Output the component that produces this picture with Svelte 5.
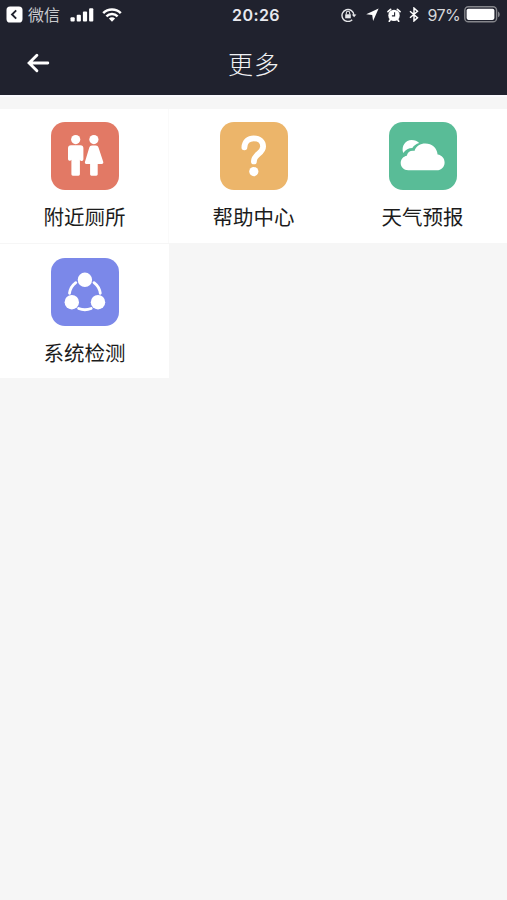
<script lang="ts">
  type IconName = 'toilet' | 'help' | 'weather' | 'system';

  interface MenuItem {
    icon: IconName;
    label: string;
    color: string;
  }

  const items: MenuItem[] = [
    { icon: 'toilet', label: '附近厕所', color: '#e27965' },
    { icon: 'help', label: '帮助中心', color: '#ecb56a' },
    { icon: 'weather', label: '天气预报', color: '#59bc97' },
    { icon: 'system', label: '系统检测', color: '#7b88e9' },
  ];
</script>

<div class="page">
  <header>
    <div class="status-bar">
      <div class="status-left">
        <svg class="back-app" width="17" height="17" viewBox="0 0 17 17">
          <rect x="0.5" y="0.5" width="16" height="16" rx="3.6" fill="#fff" />
          <path d="M10.2 4.3 6 8.5l4.2 4.2" fill="none" stroke="#20222e" stroke-width="1.9" />
        </svg>
        <span class="app-name">微信</span>
        <svg class="signal" width="24" height="14" viewBox="0 0 24 14" fill="#fff">
          <rect x="0.5" y="9.2" width="4.2" height="4.3" rx="1" />
          <rect x="6.7" y="6.7" width="4.2" height="6.8" rx="1" />
          <rect x="12.9" y="3.4" width="4.2" height="10.1" rx="1" />
          <rect x="19.1" y="0.3" width="4.2" height="13.2" rx="1" />
        </svg>
        <svg class="wifi" width="20" height="14" viewBox="0 0 20 14" fill="none" stroke="#fff" stroke-width="2.5">
          <path d="M1.2 5.1a12.5 12.5 0 0 1 17.6 0" />
          <path d="M4.4 8.4a8 8 0 0 1 11.2 0" />
          <path d="m10 13.8-3.1-3.2a4.4 4.4 0 0 1 6.2 0Z" fill="#fff" stroke="none" />
        </svg>
      </div>
      <span class="time">20:26</span>
      <div class="status-right">
        <svg class="lock" width="16" height="14" viewBox="0 0 16 14" fill="none" stroke="#e4e5e8" stroke-width="1.4">
          <path d="M11.2 11.8A6 6 0 1 1 13 7.2" />
          <path d="m10.8 6.4 2.3 2.8 2.3-2.8Z" fill="#e4e5e8" stroke="none" />
          <rect x="4.2" y="6.3" width="5.6" height="4" fill="#e4e5e8" stroke="none" />
          <path d="M5.3 6.5V5a1.7 1.7 0 0 1 3.4 0v1.5" stroke-width="1.1" />
        </svg>
        <svg class="location" width="13" height="13" viewBox="0 0 13 13">
          <path d="M12.6.4.2 6.2l6 .7.9 6Z" fill="#fff" />
        </svg>
        <svg class="alarm" width="14" height="14" viewBox="0 0 14 14">
          <path d="M1 3.6 3.6 1.3M13 3.6l-2.6-2.3M3.4 11.6 2.3 13.2M10.6 11.6l1.1 1.6" fill="none" stroke="#fff" stroke-width="1.7" stroke-linecap="round" />
          <circle cx="7" cy="7.4" r="5.7" fill="#fff" />
          <path d="M7.6 4.3v3.6H4.9" fill="none" stroke="#20222e" stroke-width="1.1" />
        </svg>
        <svg class="bluetooth" width="10" height="15" viewBox="0 0 10 15">
          <path d="m1 4.2 7.5 6.6L5 13.9V1.1l3.5 3.1L1 10.8" fill="none" stroke="#fff" stroke-width="1.5" />
        </svg>
        <span class="percent">97%</span>
        <svg class="battery" width="37" height="17" viewBox="0 0 37 17">
          <rect x="0.8" y="0.8" width="31.8" height="15" rx="3.6" fill="none" stroke="#85868b" stroke-width="1.4" />
          <rect x="2.6" y="2.7" width="27.8" height="11.2" rx="1.8" fill="#fff" />
          <path d="M34 5.4c2.3.8 2.3 5 0 5.8Z" fill="#85868b" />
        </svg>
      </div>
    </div>

    <nav>
      <button class="back" aria-label="返回">
        <svg width="24" height="22" viewBox="0 0 24 22" fill="none" stroke="#fff" stroke-width="2.9" stroke-linecap="round">
          <path d="M10.9 3.2 3.1 11l7.8 7.8M3.4 11h18.4" />
        </svg>
      </button>
      <h1>更多</h1>
    </nav>
  </header>

  <main class="grid">
    {#each items as item (item.icon)}
      <div class="cell">
        <div class="tile" style="background: {item.color}">
          <svg width="68" height="68" viewBox="0 0 68 68" fill="#fff">
            {#if item.icon === 'toilet'}
              <circle cx="24.7" cy="17.6" r="4.6" />
              <path d="M20 23.2h9.4a3 3 0 0 1 3 3v11a1.8 1.8 0 0 1-3.5.6v14.5a1.4 1.4 0 0 1-1.4 1.4h-5.7a1.4 1.4 0 0 1-1.4-1.4V37.8a1.8 1.8 0 0 1-3.4-.6v-11a3 3 0 0 1 3-3Z" />
              <circle cx="42.9" cy="17.6" r="4.6" />
              <path d="M41 23.4h3.8c1.5 0 2.2.8 2.7 2.2l4.7 14.1c.4 1.4-.2 2.2-1.4 2.2h-4.1v10.4c0 .8-.6 1.4-1.4 1.4h-4.8c-.8 0-1.4-.6-1.4-1.4V41.9h-3.8c-1.2 0-1.7-.8-1.3-2.2l4.3-14.1c.5-1.4 1.2-2.2 2.7-2.2Z" />
            {:else if item.icon === 'help'}
              <path d="M24.4 25.4c.3-5.8 4-9 9.4-9 5.7 0 9.3 3.3 9.3 8.2 0 7.3-9.2 7.2-9.2 14.8" fill="none" stroke="#fff" stroke-width="5.8" stroke-linecap="round" />
              <circle cx="33.8" cy="49.6" r="4.6" />
            {:else if item.icon === 'weather'}
              <path d="M14.2 31C12 24 16.5 18 22.6 18c3.2 0 5.8 1 7.6 2.9-3.2.8-5.3 2.5-6.9 5.1-3.9.1-6.4 1.4-9.1 5Z" />
              <path d="M19.3 48.3c-4.6 0-7.6-3.2-7.6-7.2 0-4 2.6-6.7 6.1-7.4.6-3.4 3.5-5.4 7.6-4.8 2.1-4.9 5.9-7.3 10.9-7.3 6.8 0 11.6 4.2 12.3 11 4.3.6 7 3.8 7 7.9 0 4.5-3.3 7.8-7.9 7.8Z" />
            {:else}
              <path d="M18.5 35.3a16 16 0 0 1 6.3-10.6M43 24.7a16 16 0 0 1 6.3 10.6M27.6 50.5a17 17 0 0 0 12.6 0" fill="none" stroke="#fff" stroke-width="2.8" stroke-linecap="round" />
              <circle cx="33.9" cy="21.8" r="7.2" />
              <circle cx="20.8" cy="44.2" r="7.2" />
              <circle cx="47" cy="44.2" r="7.2" />
            {/if}
          </svg>
        </div>
        <span class="label">{item.label}</span>
      </div>
    {/each}
  </main>
</div>

<style>
  :global(body) {
    background: #f6f6f6;
  }

  .page {
    min-height: 100vh;
    background: #f6f6f6;
    font-family: 'Noto Sans CJK SC', sans-serif;
  }

  header {
    height: 95px;
    border-bottom: 2px solid #fafafe;
    background: #20222e;
    background-clip: padding-box;
    color: #fff;
  }

  .status-bar {
    display: grid;
    grid-template-columns: 1fr auto 1fr;
    align-items: center;
    height: 29px;
  }

  .status-left,
  .status-right {
    display: flex;
    align-items: center;
  }

  .status-left {
    padding-left: 6px;
  }

  .status-right {
    justify-content: flex-end;
    padding-right: 6px;
  }

  .app-name {
    margin-left: 5px;
    color: #c9cace;
    font-size: 16px;
    line-height: 29px;
  }

  .signal {
    margin-left: 10px;
  }

  .wifi {
    margin-left: 8px;
  }

  .time {
    padding-left: 5px;
    color: #e8e9ee;
    font-family: Inter, sans-serif;
    font-size: 16px;
    font-weight: 600;
    letter-spacing: 0.4px;
  }

  .location {
    margin-left: 9px;
  }

  .alarm {
    margin-left: 8px;
  }

  .bluetooth {
    margin-left: 8px;
  }

  .percent {
    margin: 0 4px 0 8px;
    color: #d6d7da;
    font-family: Inter, sans-serif;
    font-size: 16px;
    letter-spacing: -0.6px;
  }

  nav {
    display: grid;
    grid-template-columns: 1fr auto 1fr;
    align-items: center;
    height: 66px;
  }

  .back {
    justify-self: start;
    display: flex;
    margin-left: 26px;
    padding: 2px 0 0;
    border: none;
    background: none;
  }

  h1 {
    margin: 0;
    padding: 2px 0 0 1px;
    color: #f0f1f4;
    font-size: 25px;
    font-weight: 300;
    letter-spacing: 1px;
  }

  .grid {
    display: grid;
    grid-template-columns: repeat(3, 1fr);
    row-gap: 1px;
    padding-top: 12px;
  }

  .cell {
    display: flex;
    flex-direction: column;
    align-items: center;
    height: 134px;
    padding-top: 13px;
    box-sizing: border-box;
    background: #fff;
  }

  .cell:nth-child(n + 4) {
    padding-top: 14px;
  }

  .cell:first-child {
    box-shadow: inset -1px 0 #fafafa;
  }

  .tile {
    width: 68px;
    height: 68px;
    border-radius: 14px;
  }

  .tile svg {
    display: block;
  }

  .label {
    margin-top: 11px;
    color: #1c1c1c;
    font-size: 20.5px;
    line-height: 30px;
  }
</style>
